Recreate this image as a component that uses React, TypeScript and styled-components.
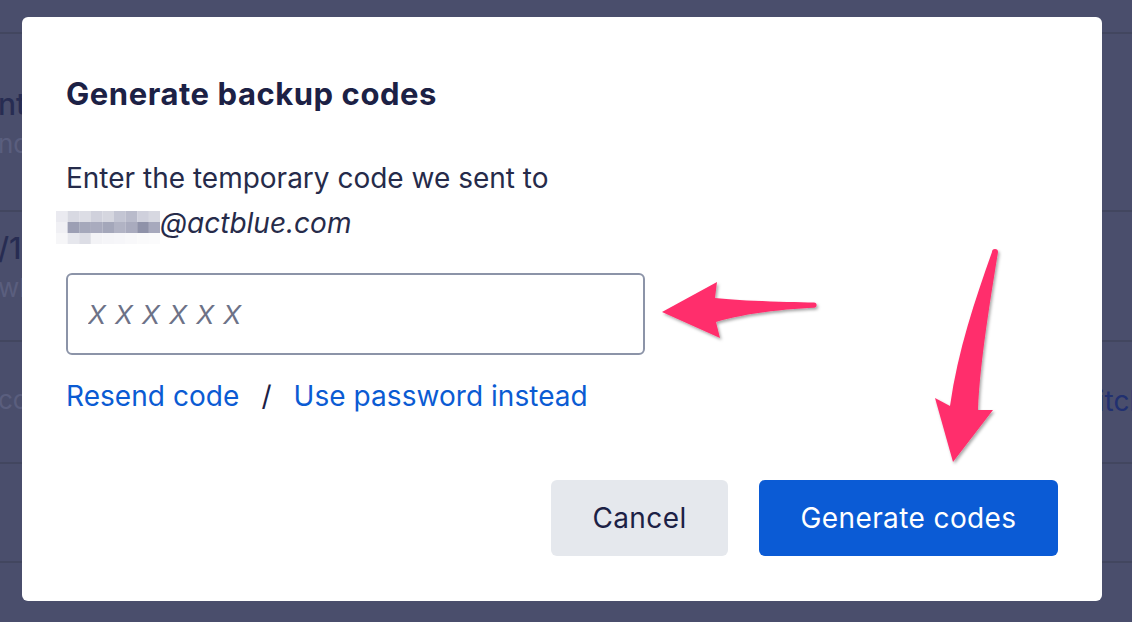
import React from "react";
import styled, { createGlobalStyle } from "styled-components";

const Global = createGlobalStyle`
  html, body { margin: 0; padding: 0; }
  body {
    width: 1132px;
    height: 622px;
    overflow: hidden;
    background: #4a4e6c;
    font-family: Inter, "Noto Sans", "Liberation Sans", sans-serif;
  }
`;

/* ---------- background page (dimmed behind overlay) ---------- */
const Page = styled.div`
  width: 1132px;
  height: 622px;
  overflow: hidden;
  background: #4a4e6c;
  display: flex;
  flex-direction: column;
  padding-top: 32px;
  box-sizing: border-box;
`;

const Row = styled.div<{ $h: number }>`
  flex-shrink: 0;
  height: ${(p) => p.$h}px;
  border-top: 2px solid #42465f;
  display: flex;
  justify-content: space-between;
  align-items: flex-start;
  box-sizing: border-box;
  white-space: nowrap;
`;

const RowText = styled.div<{ $pt: number }>`
  display: flex;
  flex-direction: column;
  padding-top: ${(p) => p.$pt}px;
  margin-left: -2px;
`;

const BgTitle = styled.span`
  font-size: 30px;
  font-weight: 500;
  color: #272c52;
  line-height: 40px;
`;

const BgSub = styled.span`
  font-size: 26px;
  color: #5a5e7e;
  line-height: 40px;
`;

const BgLink = styled.span<{ $pt: number }>`
  font-size: 28px;
  color: #213070;
  margin-right: -14px;
  padding-top: ${(p) => p.$pt}px;
`;

/* ---------- modal ---------- */
const Overlay = styled.div`
  position: fixed;
  inset: 0;
  padding: 17px 0 0 22px;
  box-sizing: border-box;
`;

const Modal = styled.div`
  width: 1080px;
  height: 584px;
  background: #ffffff;
  border-radius: 6px;
  box-sizing: border-box;
  padding: 58px 44px 45px 44px;
  display: flex;
  flex-direction: column;
`;

const Title = styled.h2`
  margin: 0;
  font-size: 31px;
  line-height: 38px;
  font-weight: 700;
  color: #1c2145;
  letter-spacing: 0.55px;
`;

const Body = styled.div`
  margin-top: 43px;
  display: flex;
  flex-direction: column;
  font-size: 28px;
  color: #262b4a;
`;

const Line = styled.div`
  height: 45px;
  line-height: 45px;
  display: flex;
  align-items: center;
`;

const Email = styled(Line)`
  margin-left: -10px;
  font-style: italic;
`;

const CodeInput = styled.input`
  margin-top: 27px;
  width: 579px;
  height: 82px;
  box-sizing: border-box;
  border: 2px solid #8c94a8;
  border-radius: 6px;
  padding: 0 20px;
  font-family: inherit;
  font-size: 26px;
  color: #262b4a;
  outline: none;
  &::placeholder {
    color: #6d7287;
    font-style: italic;
    letter-spacing: 1px;
  }
`;

const Links = styled.div`
  margin-top: 23px;
  display: flex;
  align-items: center;
  gap: 22px;
  font-size: 28px;
  line-height: 36px;
  letter-spacing: 0.05px;
`;

const LinkText = styled.a`
  color: #0b5bd3;
  text-decoration: none;
  cursor: pointer;
`;

const Slash = styled.span`
  color: #1c2145;
`;

const Actions = styled.div`
  margin-top: auto;
  display: flex;
  justify-content: flex-end;
  gap: 31px;
`;

const Button = styled.button<{ $primary?: boolean }>`
  height: 76px;
  width: ${(p) => (p.$primary ? 299 : 177)}px;
  border: none;
  border-radius: 6px;
  font-family: inherit;
  font-size: 28px;
  letter-spacing: 0.4px;
  cursor: pointer;
  background: ${(p) => (p.$primary ? "#0b5bd5" : "#e5e8ed")};
  color: ${(p) => (p.$primary ? "#ffffff" : "#1c2145")};
`;

const ArrowLayer = styled.svg`
  position: fixed;
  inset: 0;
  pointer-events: none;
`;

const blurTop = ["#eaeaf0", "#d8d9e2", "#dcdde5", "#d0d1dc", "#d5d6df", "#c3c5d3", "#b9bbcb", "#cfd0dc", "#d7d8e1"];
const blurMid = ["#f0f0f4", "#9c9fb4", "#a5a8bb", "#a9abbe", "#a4a7ba", "#b1b3c4", "#a9abbe", "#8f92a9", "#a7a9bd"];
const blurBot = ["#f6f6f8", "#e6e7ed", "#dcdde5", "#f3f3f6", "#f5f5f8", "#f6f6f9", "#f8f8fa", "#fafafb", "#fbfbfc"];

function Pixelated() {
  const rows = [blurTop, blurMid, blurBot];
  return (
    <svg width="104" height="33" viewBox="0 0 104 33" style={{ display: "block", marginTop: 8 }}>
      {rows.map((r, ri) =>
        r.map((c, ci) => (
          <rect key={`${ri}-${ci}`} x={ci * 11.6} y={ri * 11} width="11.7" height="11.1" fill={c} />
        ))
      )}
    </svg>
  );
}

export default function App() {
  return (
    <>
      <Global />
      <Page>
        <Row $h={178}>
          <RowText $pt={50}>
            <BgTitle>ntication</BgTitle>
            <BgSub>nd your account</BgSub>
          </RowText>
        </Row>
        <Row $h={130}>
          <RowText $pt={16}>
            <BgTitle>/10 codes</BgTitle>
            <BgSub>when you lose</BgSub>
          </RowText>
        </Row>
        <Row $h={122}>
          <RowText $pt={38}>
            <BgSub>code</BgSub>
          </RowText>
          <BgLink $pt={42}>Switch</BgLink>
        </Row>
        <Row $h={99} />
        <Row $h={80} />
      </Page>
      <Overlay>
        <Modal role="dialog">
          <Title>Generate backup codes</Title>
          <Body>
            <Line>Enter the temporary code we sent to</Line>
            <Email>
              <Pixelated />
              @actblue.com
            </Email>
          </Body>
          <CodeInput placeholder="X X X X X X" />
          <Links>
            <LinkText>Resend code</LinkText>
            <Slash>/</Slash>
            <LinkText>Use password instead</LinkText>
          </Links>
          <Actions>
            <Button>Cancel</Button>
            <Button $primary>Generate codes</Button>
          </Actions>
        </Modal>
      </Overlay>
      <ArrowLayer width="1132" height="622" viewBox="0 0 1132 622">
        <defs>
          <filter id="sh" x="-20%" y="-20%" width="140%" height="140%">
            <feDropShadow dx="1.5" dy="2" stdDeviation="1.5" floodColor="#000" floodOpacity="0.35" />
          </filter>
        </defs>
        <g fill="#ff2e6c" filter="url(#sh)">
          <path d="M662,312 L717,282 L715,298 C740,301 790,302 814,302.5 A2.6,2.6 0 0 1 814,307.7 C790,308.5 745,313 716,322 L720,338 Z" />
          <path d="M992,252 A3,3 0 0 1 998,252 C992,290 980,360 978,410 L993,410 L953,462 L935,398 L950,406 C958,350 975,300 992,252 Z" />
        </g>
      </ArrowLayer>
    </>
  );
}
